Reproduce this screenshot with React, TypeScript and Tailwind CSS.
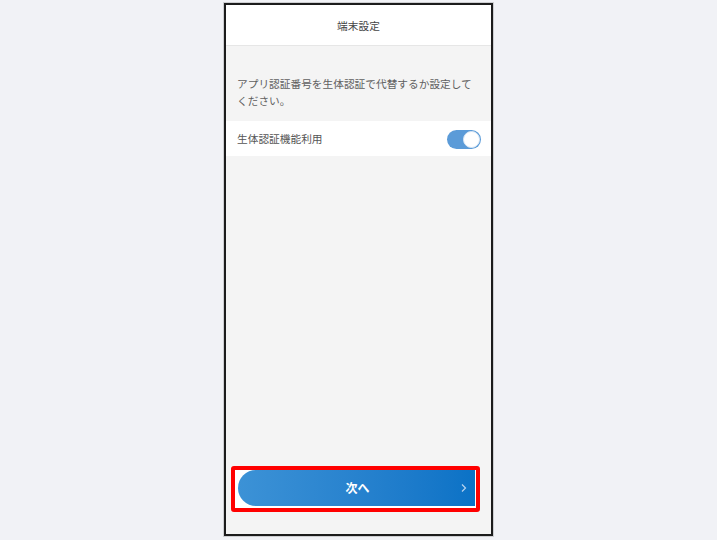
import React from "react";

export default function App() {
  const font = { fontFamily: '"Noto Sans CJK JP", "Noto Sans", sans-serif' };
  return (
    <div className="w-[717px] h-[540px] bg-[#f1f2f6] pt-[3px] pl-[224px]" style={font}>
      <div className="w-[269px] h-[533px] border-2 border-[#1c1c1c] bg-[#f4f4f4] flex flex-col shadow-[0_0_0_1px_rgba(0,0,0,0.15)]">
        <div className="h-[41px] bg-white flex items-center justify-center border-b border-[#e6e6e6] shrink-0 pt-[3px]">
          <span className="text-[10.7px] text-[#444]">端末設定</span>
        </div>
        <div className="px-[11px] pt-[29px] text-[10.7px] leading-[17px] text-[#606060]">
          アプリ認証番号を生体認証で代替するか設定してください。
        </div>
        <div className="mt-[12px] h-[35px] bg-white flex items-center justify-between pl-[11px] pr-[10px] pt-[1px]">
          <span className="text-[10.7px] text-[#555]">生体認証機能利用</span>
          <div className="w-[34px] h-[19px] rounded-full bg-[#5b9bd8] flex items-center justify-end pr-[1px]">
            <div className="w-[17px] h-[17px] rounded-full bg-white border border-[#dbe8f5]" />
          </div>
        </div>
        <div className="flex-1" />
        <div className="ml-[5px] mr-[11px] mb-[22px] h-[46px] border-4 border-[#ff0000] rounded-[3px] bg-white pl-[3px] pr-[1px] pb-[2px]">
          <div className="h-full rounded-l-full bg-gradient-to-r from-[#3c92d6] to-[#0a72c6] flex items-center relative">
            <span className="flex-1 text-center text-white font-bold text-[12px] pl-[2px]">次へ</span>
            <svg className="absolute right-[8px] top-1/2 -translate-y-1/2" width="6" height="9" viewBox="0 0 6 9">
              <path d="M1 1 L4.5 4.5 L1 8" fill="none" stroke="#b8d4ef" strokeWidth="1.2" />
            </svg>
          </div>
        </div>
      </div>
    </div>
  );
}
